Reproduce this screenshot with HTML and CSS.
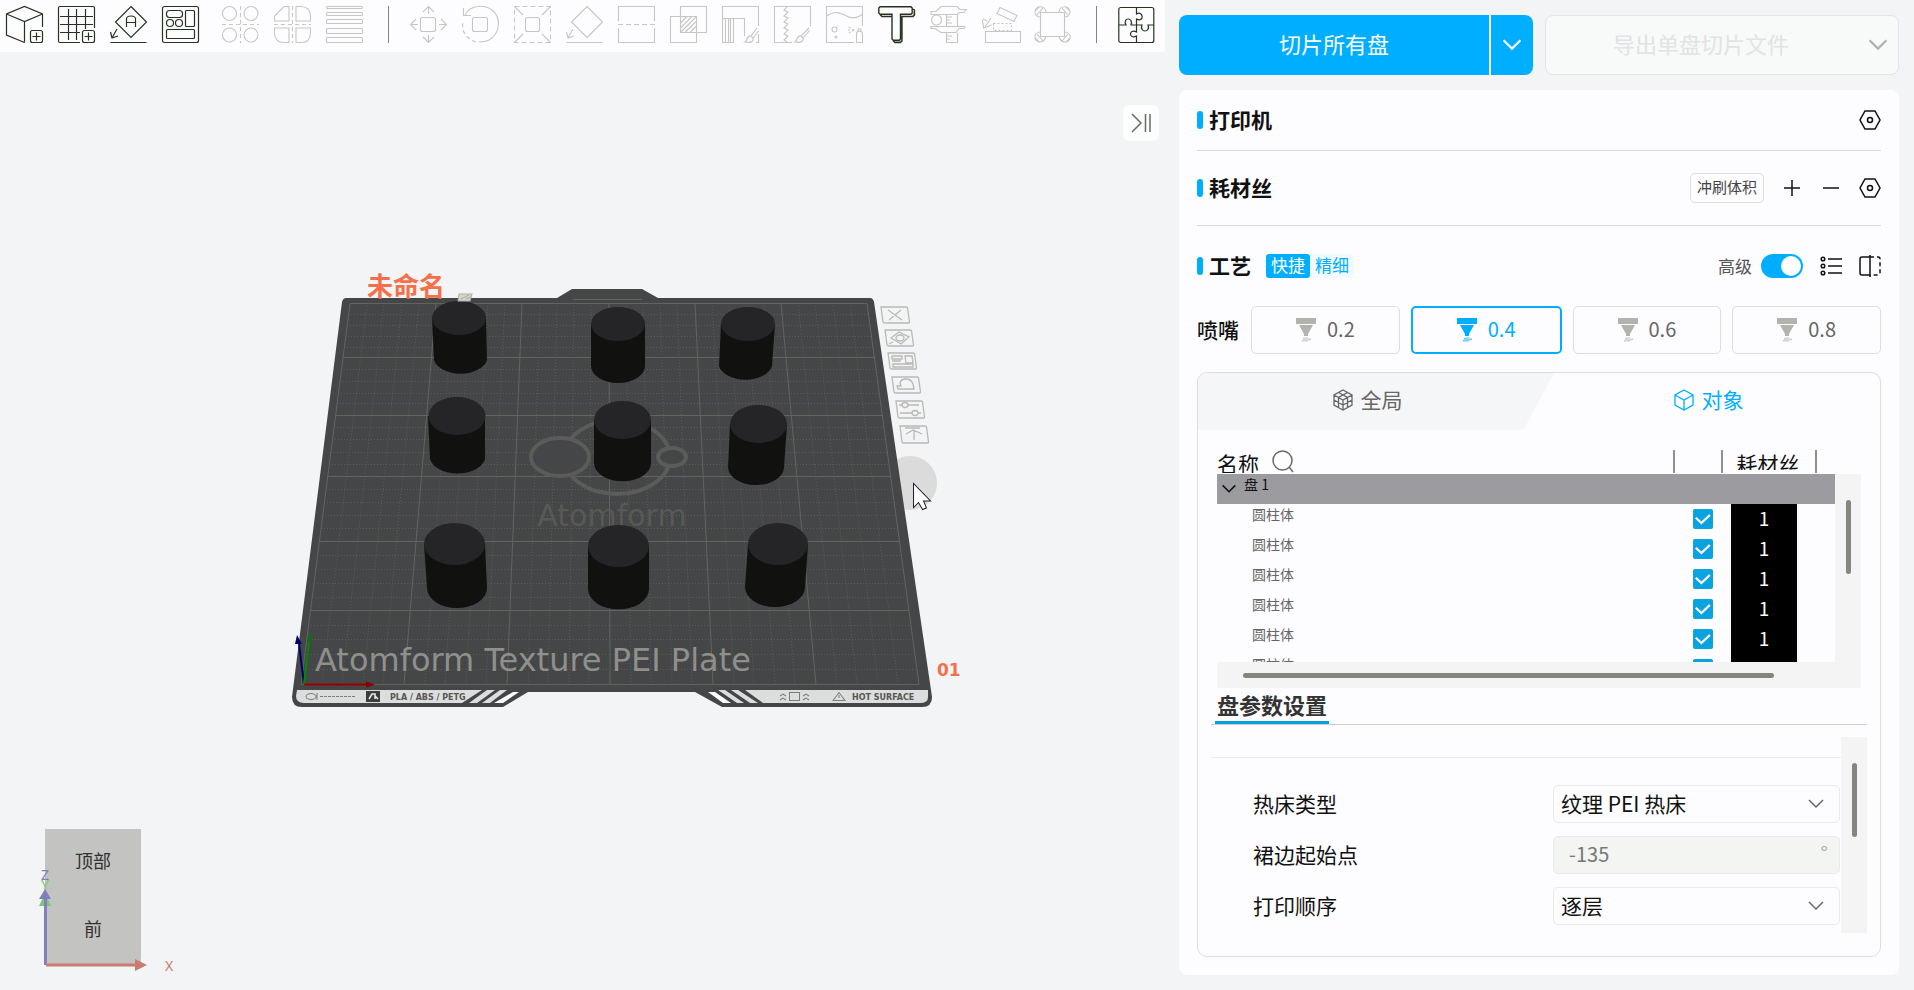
FILE: index.html
```html
<!DOCTYPE html>
<html lang="zh-CN">
<head>
<meta charset="utf-8">
<title>切片</title>
<link rel="stylesheet" href="styles.css">
</head>
<body>
<svg class="defs" aria-hidden="true">
  <symbol id="chevron" viewBox="0 0 20 20"><path d="M3 6l7 7 7-7"/></symbol>
  <symbol id="hex" viewBox="0 0 22 22"><path d="M6 2h10l5 9-5 9H6l-5-9z"/><circle cx="11" cy="11" r="2.5"/></symbol>
  <symbol id="nozzle" viewBox="0 0 20 24"><path class="solid" d="M0 0h20v6H0zM3 7h14l-5 9v2H8v-2z"/><path class="trail" d="M12 19c0 2-5 0-5 2h8c0 2-9 0-9 2h6"/></symbol>
</svg>
<div class="app">
  <main class="viewport">
    <nav class="toolbar" aria-label="工具栏">
      <div class="tools">
        <button class="tool" aria-label="添加模型"><svg viewBox="0 0 37 37"><path d="M18.500 36.500L.5 29V8l18-7.500L36.500 8v13M.5 8l18 7.500L36.500 8M18.500 15.500v21"/><rect x="24.500" y="24.500" width="12" height="12" rx="2"/><path d="M26.500 30.500h8M30.500 26.500v8"/></svg></button>
        <button class="tool" aria-label="添加盘"><svg viewBox="0 0 37 37"><path d="M36.500 22V2a1.500 1.500 0 0 0-1.500-1.500H2A1.500 1.500 0 0 0 .5 2v33A1.500 1.500 0 0 0 2 36.500h20M2 10.500h33M2 18.500h33M2 26.500h20M10.500 3v31M18.500 3v31M27.500 3v20"/><rect x="24.500" y="24.500" width="12" height="12" rx="2"/><path d="M26.500 30.500h8M30.500 26.500v8"/></svg></button>
        <button class="tool" aria-label="自动朝向"><svg viewBox="0 0 37 37"><path d="M21 .5L36.500 16 21 31.500 5.500 16zM.5 36.500h36M7 23L2 32M.5 26l1.500 6 6-2M16.500 21v-8c0-4 9-4 9 0v8M16.500 16.500h9"/></svg></button>
        <button class="tool" aria-label="自动摆盘"><svg viewBox="0 0 37 37"><rect x=".5" y=".5" width="36" height="36" rx="2"/><rect x="4.500" y="4.500" width="16" height="7" rx="3"/><rect x="23.500" y="4.500" width="9" height="16" rx="1"/><circle cx="8" cy="17" r="3.500"/><circle cx="17" cy="17" r="3.500"/><rect x="4.500" y="23.500" width="28" height="9" rx="1"/></svg></button>
      </div>
      <div class="tools tools-split">
        <button class="tool off" aria-label="拆分为对象"><svg viewBox="0 0 37 37"><circle cx="7.500" cy="7.500" r="7"/><circle cx="29" cy="7.500" r="7"/><circle cx="7.500" cy="29" r="7"/><circle cx="29" cy="29" r="7"/><path stroke-dasharray="4 3" d="M18.500 0v37M0 18.500h37"/></svg></button>
        <button class="tool off" aria-label="拆分为零件"><svg viewBox="0 0 37 37"><path d="M15 15H.5V10L10 .5h5zM22 15h14.500V10Q36 .5 27 .5h-5zM15 22H.5v5Q1 36.500 10 36.500h5zM22 22h14.500v5q0 9.500-9.500 9.500h-5z"/><path stroke-dasharray="4 3" d="M18.500 0v37M0 18.500h37"/></svg></button>
        <button class="tool off" aria-label="可变层高"><svg viewBox="0 0 37 37"><rect x=".5" y=".5" width="36" height="2" rx="1"/><rect x=".5" y="6.500" width="36" height="3" rx="1"/><rect x=".5" y="13.500" width="36" height="4" rx="1"/><rect x=".5" y="22.500" width="36" height="5" rx="1"/><rect x=".5" y="31.500" width="36" height="5" rx="1"/></svg></button>
      </div>
      <span class="sep"></span>
      <div class="tools">
        <button class="tool off" aria-label="移动"><svg viewBox="0 0 37 37"><rect x="10.500" y="11.500" width="15" height="14" rx="2"/><path d="M18.500 8V.5M13 6l5.500-5.500L24 6M18.500 29v7.500M13 31l5.500 5.500L24 31M8 18.500H.5M6 13L.5 18.500 6 24M29 18.500h7.500M31 13l5.500 5.500L31 24"/></svg></button>
        <button class="tool off" aria-label="旋转"><svg viewBox="0 0 37 37"><rect x="10.500" y="11.500" width="15" height="14" rx="2"/><path d="M3 9C8-1 22-2 30 4c10 8 8 24-3 30-4 2-7 2-10 2"/><path stroke-dasharray="4 3" d="M14 36C5 33-1 26 1 16"/><path d="M1.500 2v7.500H9"/></svg></button>
        <button class="tool off" aria-label="缩放"><svg viewBox="0 0 37 37"><rect x="11.500" y="11.500" width="14" height="14" rx="2"/><path stroke-dasharray="5 3" d="M.5 .5h36v36H.5z"/><path d="M.5 .5L9 9M36.500 .5L28 9M.5 36.500L9 28M36.500 36.500L28 28"/></svg></button>
        <button class="tool off" aria-label="选择底面"><svg viewBox="0 0 37 37"><path d="M21 .5L36.500 16 21 31.500 5.500 16zM.5 36.500h36M7 23L2 32M.5 26l1.500 6 6-2"/></svg></button>
        <button class="tool off" aria-label="切割"><svg viewBox="0 0 37 37"><path d="M.5 15V.5h36V15M.5 22v14.500h36V22"/><path stroke-dasharray="5 3" d="M0 18.500h37"/></svg></button>
        <button class="tool off" aria-label="布尔运算"><svg viewBox="0 0 37 37"><path d="M10.500 .5h26v26h-26zM.5 10.500h26v26H.5zM10.500 17l6-6M10.500 22l11-11M10.500 26.500l16-16M15 26.500L26.500 15M20 26.500l6.500-6.500"/></svg></button>
        <button class="tool off" aria-label="支撑绘制"><svg viewBox="0 0 37 37"><path d="M36.500 20V.5H.5v36h11v-24M.5 12.500h22V30M3.500 13v23M6.500 13v23M8.500 13v23M35 22l-6 8 2 2 5.500-7M29 30c-5-1-3 5-6 6 5 1 9 0 8-4M36.500 28v8.500H34"/></svg></button>
        <button class="tool off" aria-label="接缝绘制"><svg viewBox="0 0 37 37"><path d="M36.500 20V.500H.5v36H18M13 1l-3 3 4 2-4 4 4 2-4 4 4 2-4 4 4 2-4 4 4 2-4 4 3 2M35 22l-8 8 2 2 7-8M27 30c-5-1-3 5-6 6 5 1 9 0 8-4"/></svg></button>
        <button class="tool off" aria-label="颜色绘制"><svg viewBox="0 0 37 37"><path d="M36.500 20V.5H.5v36H28M.5 10c9-6 14-3 20 0 5 3 11 2 16-2M30.500 27.500c0-3 6-3 6 0v9h-6zM32 25v-2h3v2"/><circle cx="8.500" cy="23.500" r="2.500"/><circle cx="10" cy="31" r="1"/><path stroke-dasharray="2 2" d="M28 24l-7-4M28 24h-8M28 24l-7 4"/></svg></button>
        <button class="tool bold" aria-label="文字"><svg viewBox="0 0 37 37"><path class="shade" d="M23 10h11l2-6v5l-1.500 1.500H24V35l-2 1.500h-4l-2-2h5.500L23 33z"/><path d="M2 .8h31l1.200 1.200v5L33 8.200H22.500V33l-1.300 1.200h-6L14 33V8.200H2L.8 7V2zM35 3l1.500 1v5L35 10.500H24V35l-1.500 1.500H17L15 34.500M2 8.500L4 10.500h10"/></svg></button>
        <button class="tool off" aria-label="测量"><svg viewBox="0 0 37 37"><path d="M1 5.500h5l5-5h16l3 3h6l-2 3h-5l-2 2H1zM1 20.500h34l-1 2h-5l-3 4H11l-6-4H1zM16.500 8v12M27.500 8v12M16.500 27v9.500h11V27M17 11h5M17 14h3M17 17h5M17 30h5M17 33h3"/><circle cx="6.500" cy="14" r="5"/></svg></button>
        <button class="tool off" aria-label="装配"><svg viewBox="0 0 37 37"><path d="M3.500 25.500h35v11h-35zM18 1.500l17 8-3 6-17-8zM9 12l-6 9M.5 14l1 8 8-3M1 13l4 2"/><path stroke-dasharray="2 2" d="M11.500 17.500h18v7h-18z"/></svg></button>
        <button class="tool off" aria-label="浮雕"><svg viewBox="0 0 37 37"><path d="M6.500 6.500h24v24h-24zM12 6.500C12-1 1-1 1 6c0 3 2 5 5.500 5M25 6.500C25-1 36-1 36 6c0 3-2 5-5.500 5M6.500 26C-1 26-1 36 6 36c3 0 5-2 6-5.500M30.500 26C38 26 38 36 31 36c-3 0-5-2-6-5.500M3 9l6-7M1 5l4-4M28 2l6 7M32 1l4 4M3 28l6 7M1 32l4 4M34 28l-6 7M36 32l-4 4"/></svg></button>
      </div>
      <span class="sep"></span>
      <div class="tools">
        <button class="tool" aria-label="拼装视图"><svg viewBox="0 0 37 37"><rect x=".8" y="1.500" width="35" height="35" rx="2"/><path d="M18.500 1.500V8c7-4 8 9 0 5v6M1 19h7c-4-8 8-8 5 0h5.500M18.500 19H24c-3 8 9 8 6 0h6M18.500 19v7c-8-4-8 8 0 4v6.500"/></svg></button>
      </div>
    </nav>

    <div class="stage">
      <svg class="scene" viewBox="0 52 1179 938" role="img" aria-label="打印盘">
        <circle class="halo" cx="910" cy="483" r="27"/>
        <path class="plate" d="M346 298H557L572 289H642L658 298H870Q873 298 874 302L932 697Q932 707 922 707H722L695 692H528L503 707H302Q292 707 292 697L342 302Q343 298 346 298z"/>
        <path class="tab-line" d="M573 299.500H642"/>
        <path class="grid-minor" d="M367 303L322 684M384 303L342 684M402 303L363 684M419 303L383 684M453 303L425 684M471 303L445 684M488 303L466 684M505 303L486 684M540 303L528 684M557 303L548 684M574 303L569 684M591 303L589 684M626 303L631 684M643 303L651 684M660 303L672 684M677 303L692 684M712 303L734 684M729 303L754 684M746 303L775 684M764 303L795 684M798 303L837 684M815 303L857 684M833 303L878 684M850 303L898 684"/>
        <path class="grid-minor" d="M348 314.500H869M347 325.500H870M345 336.500H872M344 347.500H873M341 369.500H876M340 381.500H878M338 393.500H880M337 403.500H881M334 427.500H884M332 439.500H886M331 452.500H888M329 464.500H889M326 489.500H893M324 502.500H895M322 515.500H896M321 528.500H898M317 555.500H902M315 569.500H904M314 583.500H906M312 597.500H907M308 625.500H911M306 639.500H913M305 654.500H915M303 669.500H917"/>
        <path class="grid-major" d="M350 303.500L301 684.500M436 303.500L404 684.500M522 303.500L507 684.500M609 303.500L610 684.500M695 303.500L713 684.500M781 303.500L816 684.500M867 303.500L919 684.500M350 303.500H867M343 357.500H875M336 415.500H883M327 476.500H891M319 541.500H900M310 610.500H909M301 684.500H919"/>
        <g class="brand">
          <ellipse cx="617" cy="457" rx="53" ry="37"/>
          <ellipse class="knock" cx="560" cy="457" rx="29" ry="19"/>
          <ellipse class="knock" cx="672" cy="457" rx="14" ry="9"/>
        </g>
        <text class="brand-name" x="612" y="526" text-anchor="middle">Atomform</text>
        <text class="plate-type" x="315" y="671">Atomform Texture PEI Plate</text>

        <path class="strip" d="M297 690H482L462 703H304Q296 703 296 696zM487 690H495L477 703H469zM500 690H507L490 703H482zM745 690H928V697Q928 703 920 703H763zM731 690H738L758 703H750zM718 690H725L744 703H737z"/>
        <path class="gap" d="M513 692H519L503 703H494zM708 692H715L731 703H723z"/>
        <path class="ink" d="M306 696.500a5 3 0 1 1 10 0a5 3 0 1 1-10 0M317 693v7"/><path class="ink" stroke-dasharray="3 1" d="M320 696.500h35"/>
        <path class="ink-solid" d="M366 691h14v11h-14z"/><path class="ink-cut" d="M369 699l3-5h3v5M375 696l3 3"/>
        <text class="strip-text" x="390" y="700">PLA / ABS / PETG</text>
        <path class="ink" d="M780 696l3-2 3 2M780 700l3-2 3 2M789.500 692.500h10v8h-10zM803 696l3-2 3 2M803 700l3-2 3 2M833 700.500l6-8 6 8zM839 695v3"/>
        <text class="strip-text" x="852" y="700">HOT SURFACE</text>

        <g class="body">
          <path d="M432 318H486L487 360A27 17 0 0 1 434 360z"/><path d="M591 324H645V366A27 17 0 0 1 591 366z"/><path d="M721 324H775L772 366A27 17 0 0 1 719 366z"/>
          <path d="M428 416H485V459A28 18 0 0 1 430 459z"/><path d="M594 420H651V463A28 18 0 0 1 594 463z"/><path d="M730 424H787L784 467A28 18 0 0 1 728 467z"/>
          <path d="M424 544H485L487 588A30 20 0 0 1 427 588z"/><path d="M588 546H649V589A30 20 0 0 1 588 589z"/><path d="M748 544H808L805 587A30 20 0 0 1 745 587z"/>
        </g>
        <g class="cap">
          <ellipse cx="459" cy="318" rx="27" ry="17"/><ellipse cx="618" cy="324" rx="27" ry="17"/><ellipse cx="748" cy="324" rx="27" ry="17"/>
          <ellipse cx="457" cy="416" rx="28.500" ry="19"/><ellipse cx="622.500" cy="420" rx="28.500" ry="19"/><ellipse cx="758.500" cy="424" rx="28.500" ry="19"/>
          <ellipse cx="454.500" cy="544" rx="30.500" ry="21"/><ellipse cx="618.500" cy="546" rx="30.500" ry="21"/><ellipse cx="778" cy="544" rx="30" ry="21"/>
        </g>
        <text class="plate-name" x="406" y="296" text-anchor="middle">未命名</text>
        <path class="pencil" d="M459 294h13l-2 7h-12zM461 299l8-4M466 299l5-2"/>
        <text class="plate-no" x="937" y="676">01</text>

        <g class="side">
          <path d="M881 307h25q1 0 1.500 1l2 14q0 1-1 1h-24q-1 0-1.500-1zM888 310l14 10M901 310l-12 10"/>
          <path d="M885 330h25q1 0 1.500 1l2 14q0 1-1 1h-24q-1 0-1.500-1zM891 338l8-6 10 5-8 7zM889 344l4-2"/><ellipse cx="900" cy="338" rx="4" ry="3"/>
          <path d="M888 353h25q1 0 1.500 1l2 14q0 1-1 1h-24q-1 0-1.500-1zM892 356h10v3h-10zM905 356h7l1 7h-7zM892 361h9M893 364h20v3h-20z"/>
          <path d="M892 377h25q1 0 1.500 1l2 14q0 1-1 1h-24q-1 0-1.500-1zM898 389l-1-3h4l-1-3q1-4 6-4t7 5l1 5z"/>
          <path d="M896 401h25q1 0 1.500 1l2 15q0 1-1 1h-24q-1 0-1.500-1zM899 405h4M908 405h11M900 413h12M918 413h3"/><ellipse cx="905" cy="405" rx="3" ry="2.500"/><ellipse cx="915" cy="413" rx="3" ry="2.500"/>
          <path d="M900 426h25q1 0 1.500 1l2 15q0 1-1 1h-24q-1 0-1.500-1zM905 428h15M914 440v-10M906 434l7-4 9 4"/>
        </g>

        <path class="axis-z" d="M304 684L299 644"/><path class="axis-z-head" d="M297 635l-2 9h7z"/>
        <path class="axis-y" d="M304 684L309 642"/><path class="axis-y-head" d="M310 633l-3 8h5z"/>
        <path class="axis-x" d="M304 684.500H368"/><path class="axis-x-head" d="M375 684.500l-9-3v6z"/>

        <path class="cursor" d="M913.500 483.500v24l5-5 4 7 4-1.500-3-7h7z"/>

        <rect class="cube" x="45" y="829" width="96" height="136"/>
        <text class="cube-text" x="93" y="868" text-anchor="middle">顶部</text>
        <text class="cube-text" x="93" y="936" text-anchor="middle">前</text>
        <text class="lab-y" x="45" y="890" text-anchor="middle">Y</text>
        <path class="gy" d="M45 893l6 13H39z"/>
        <text class="lab-z" x="45" y="880" text-anchor="middle">Z</text>
        <path class="gz" d="M44 965V899h-5l6-10 6 10h-4v66z"/>
        <path class="gx" d="M46 963.500h89V959l12 6-12 6v-4.500H46z"/>
        <text class="lab-x" x="169" y="971" text-anchor="middle">X</text>
      </svg>
      <button class="collapse" aria-label="收起面板"><svg viewBox="0 0 20 20"><path d="M1 1l9 9-9 9M14.500 1v18M19 1v18"/></svg></button>
    </div>
  </main>

  <aside class="side-panel">
    <div class="actions">
      <div class="slice">
        <button class="slice-main">切片所有盘</button>
        <button class="slice-more" aria-label="切片选项"><svg class="chev"><use href="#chevron"/></svg></button>
      </div>
      <button class="export" disabled><span>导出单盘切片文件</span><svg class="chev"><use href="#chevron"/></svg></button>
    </div>

    <div class="card">
      <section class="row row-printer">
        <h2>打印机</h2>
        <div class="row-tools"><button class="icon-btn" aria-label="打印机设置"><svg><use href="#hex"/></svg></button></div>
      </section>
      <section class="row row-filament">
        <h2>耗材丝</h2>
        <div class="row-tools">
          <button class="flush">冲刷体积</button>
          <button class="icon-btn" aria-label="添加耗材丝"><svg viewBox="0 0 22 22"><path d="M3 11h16M11 3v16"/></svg></button>
          <button class="icon-btn" aria-label="移除耗材丝"><svg viewBox="0 0 22 22"><path d="M3 11h16"/></svg></button>
          <button class="icon-btn" aria-label="耗材丝设置"><svg><use href="#hex"/></svg></button>
        </div>
      </section>
      <section class="row row-process">
        <h2>工艺</h2>
        <div class="modes"><button class="mode on">快捷</button><button class="mode">精细</button></div>
        <div class="row-tools">
          <label class="adv"><span>高级</span><input type="checkbox" class="switch" checked></label>
          <button class="icon-btn" aria-label="参数列表"><svg viewBox="0 0 22 22"><circle cx="3" cy="4" r="1.800"/><circle cx="3" cy="11" r="1.800"/><circle cx="3" cy="18" r="1.800"/><path d="M8 4h14M8 11h14M8 18h14"/></svg></button>
          <button class="icon-btn" aria-label="对比参数"><svg viewBox="0 0 22 22"><path d="M11 0v22M11 2H3Q1 2 1 4v14q0 2 2 2h8"/><path stroke-dasharray="4 3" d="M11 2h8q2 0 2 2v14q0 2-2 2h-8"/></svg></button>
        </div>
      </section>

      <fieldset class="nozzles">
        <legend class="nozzle-label">喷嘴</legend>
        <label class="nozzle"><input type="radio" name="nozzle"><svg><use href="#nozzle"/></svg><span>0.2</span></label>
        <label class="nozzle"><input type="radio" name="nozzle" checked><svg><use href="#nozzle"/></svg><span>0.4</span></label>
        <label class="nozzle"><input type="radio" name="nozzle"><svg><use href="#nozzle"/></svg><span>0.6</span></label>
        <label class="nozzle"><input type="radio" name="nozzle"><svg><use href="#nozzle"/></svg><span>0.8</span></label>
      </fieldset>

      <div class="scope">
        <div class="scope-tabs" role="tablist">
          <button class="scope-tab" role="tab"><svg viewBox="0 0 20 22"><path d="M10 1l9 5v10l-9 5-9-5V6zM1 6l9 5 9-5M10 11v10M5.500 3.500l9 5v10M14.500 3.500l-9 5v10M1 11l9 5 9-5"/></svg>全局</button>
          <button class="scope-tab on" role="tab" aria-selected="true"><svg viewBox="0 0 20 22"><path d="M10 1l9 5v10l-9 5-9-5V6zM1 6l9 5 9-5M10 11v10"/></svg>对象</button>
        </div>

        <div class="objects">
          <div class="object-clip">
            <table class="object-table">
              <colgroup><col><col class="c-check"><col class="c-fil"><col class="c-end"></colgroup>
              <thead><tr>
                <th><div class="th name">名称<svg viewBox="0 0 22 24"><circle cx="10.500" cy="10.500" r="9.500"/><path d="M17 17l4 5"/></svg></div></th>
                <th class="bar"></th>
                <th class="bar"><div class="th">耗材丝</div></th>
                <th class="bar"></th>
              </tr></thead>
              <tbody>
                <tr class="plate-row"><td colspan="4"><div class="plate-cell"><svg class="chev-s"><use href="#chevron"/></svg><span>盘 1</span></div></td></tr>
                <tr><td class="obj">圆柱体</td><td class="ck"><input type="checkbox" checked aria-label="打印"></td><td class="fil"><span>1</span></td><td></td></tr>
                <tr><td class="obj">圆柱体</td><td class="ck"><input type="checkbox" checked aria-label="打印"></td><td class="fil"><span>1</span></td><td></td></tr>
                <tr><td class="obj">圆柱体</td><td class="ck"><input type="checkbox" checked aria-label="打印"></td><td class="fil"><span>1</span></td><td></td></tr>
                <tr><td class="obj">圆柱体</td><td class="ck"><input type="checkbox" checked aria-label="打印"></td><td class="fil"><span>1</span></td><td></td></tr>
                <tr><td class="obj">圆柱体</td><td class="ck"><input type="checkbox" checked aria-label="打印"></td><td class="fil"><span>1</span></td><td></td></tr>
                <tr><td class="obj">圆柱体</td><td class="ck"><input type="checkbox" checked aria-label="打印"></td><td class="fil"><span>1</span></td><td></td></tr>
              </tbody>
            </table>
          </div>
          <div class="track-v"><div class="thumb-v"></div></div>
          <div class="track-h"><div class="thumb-h"></div></div>
        </div>

        <div class="params">
          <h3><span>盘参数设置</span></h3>
          <div class="param-body">
            <form class="param-form">
              <label for="bed">热床类型</label>
              <div class="field"><select id="bed"><option>纹理 PEI 热床</option></select><svg><use href="#chevron"/></svg></div>
              <label for="skirt">裙边起始点</label>
              <div class="field off"><input id="skirt" type="text" value="-135" disabled><span class="unit">°</span></div>
              <label for="order">打印顺序</label>
              <div class="field"><select id="order"><option>逐层</option></select><svg><use href="#chevron"/></svg></div>
            </form>
            <div class="track-p"><div class="thumb-v"></div></div>
          </div>
        </div>
      </div>
    </div>
  </aside>
</div>
</body>
</html>
```

FILE: styles.css
```css
:root {
  --bg: #f2f4f5;
  --panel: #fdfdff;
  --accent: #00aeff;
  --line: #dcdce4;
  --track: #f4f4f4;
}

* { box-sizing: border-box; }

body {
  margin: 0;
  background: var(--bg);
  color: #111;
  font-family: "Noto Sans CJK SC", "Noto Sans", sans-serif;
  font-size: 21px;
}

button, input, select {
  margin: 0;
  padding: 0;
  border: 0;
  background: none;
  color: inherit;
  font: inherit;
}

svg { display: block; fill: none; stroke: currentColor; }
.defs { position: absolute; width: 0; height: 0; }

.app {
  display: grid;
  grid-template-columns: minmax(0, 1fr) 38.4%;
  min-height: 100vh;
}

/* Toolbar */
.viewport { display: flex; flex-direction: column; min-width: 0; }
.toolbar {
  display: flex;
  align-items: center;
  height: 52px;
  margin-right: 14px;
  padding: 0 6px 4px;
  background: var(--panel);
}
.tools { display: flex; gap: 15px; }
.tools-split { margin-left: 23px; }
.tool { width: 37px; height: 37px; color: #26331f; }
.tool svg { width: 37px; height: 37px; overflow: visible; stroke-width: 1.2; }
.tool.off { color: #c6c6c2; }
.tool.off svg { stroke-width: 1.1; }
.tool.bold svg { stroke-width: 1.4; }
.tool .shade { fill: #b4b9b2; stroke: none; }
.sep { width: 1px; height: 37px; margin: 0 21px 0 25px; background: #85857c; }

/* 3D view */
.stage { position: relative; flex: 1; min-height: 0; }
.scene { width: 100%; height: 100%; }
.scene text { stroke: none; }
.plate { fill: #454648; stroke: none; }
.tab-line { stroke: #66665a; }
.grid-minor { stroke: #5c5d55; stroke-width: 1; stroke-dasharray: 1 2; }
.grid-major { stroke: #63645d; stroke-width: 1; }
.brand { stroke: #5b5c59; stroke-width: 4; }
.knock { fill: #454648; }
.brand-name { fill: #585955; font: 30px "DejaVu Sans", sans-serif; }
.plate-type { fill: #8f908c; font: 32px "DejaVu Sans", sans-serif; }
.strip { fill: #dcdddd; stroke: none; }
.gap { fill: #fdfdff; stroke: none; }
.ink { stroke: #7c7d79; }
.ink-solid { fill: #3c3d3c; stroke: none; }
.ink-cut { stroke: #eee; stroke-width: 1.5; }
.strip-text { fill: #555653; font: bold 8px "DejaVu Sans", sans-serif; }
.body { fill: #11110f; stroke: none; }
.cap { fill: #252527; stroke: none; }
.plate-name { fill: #f5704a; font: bold 26px "Noto Sans CJK SC", sans-serif; }
.plate-no { fill: #f5704a; font: bold 17px "DejaVu Sans", sans-serif; }
.pencil { fill: #d5d5d0; stroke: #b0b0a8; }
.side { stroke: #b9b9b6; stroke-width: 1.3; }
.axis-z { stroke: #00006e; stroke-width: 2; }
.axis-z-head { fill: #00006e; stroke: none; }
.axis-y { stroke: #008a00; stroke-width: 2; }
.axis-y-head { fill: #007a00; stroke: none; }
.axis-x { stroke: #9a0000; stroke-width: 2; }
.axis-x-head { fill: #850000; stroke: none; }
.halo { fill: #dadbda; stroke: none; }
.cursor { fill: #fff; stroke: #1a1a2a; }
.cube { fill: #c3c3c2; stroke: none; }
.cube-text { fill: #30302c; font: 18px "Noto Sans CJK SC", sans-serif; }
.lab-x, .lab-y, .lab-z { font: 14px "Noto Sans", sans-serif; }
.lab-x { fill: #c97c74; }
.lab-y { fill: #7cc67c; }
.lab-z { fill: #7f80b4; }
.gx { fill: #c97c74; stroke: none; }
.gy { fill: #7cc67c; stroke: none; }
.gz { fill: #8081bb; stroke: none; }

.collapse {
  position: absolute;
  top: 53px;
  right: 20px;
  display: grid;
  place-items: center;
  width: 36px;
  height: 36px;
  border-radius: 6px;
  background: #fcfdfd;
  color: #6a6a66;
}
.collapse svg { width: 20px; height: 20px; stroke-width: 1.5; }

/* Right panel */
.side-panel {
  display: flex;
  flex-direction: column;
  gap: 15px;
  min-width: 0;
  padding: 15px 15px 15px 0;
}
.actions { display: grid; grid-template-columns: 1fr 1fr; gap: 12px; height: 60px; }
.actions button { font-size: 22px; }
.chev { width: 24px; height: 24px; stroke-width: 1.8; }
.slice {
  display: flex;
  gap: 2px;
  overflow: hidden;
  border-radius: 8px;
  background: #fff;
}
.slice button { background: var(--accent); color: #fff; }
.slice .slice-main { flex: 1; padding-bottom: 4px; }
.slice-more { display: grid; place-items: center; width: 42px; }
.export {
  display: flex;
  align-items: center;
  padding: 0 8px 0 0;
  border: 1px solid #e4e5ea;
  border-radius: 8px;
  background: #f8f9f9;
  color: #e2e3e4;
}
.export span { flex: 1; padding: 0 10px 4px 0; }
.export .chev { color: #b0b0ac; }

.card {
  flex: 1;
  display: flex;
  flex-direction: column;
  padding: 0 18px 18px;
  border-radius: 8px;
  background: var(--panel);
}
.row { display: flex; align-items: center; border-bottom: 1px solid #d6d7dc; }
.row-printer { height: 61px; }
.row-filament { height: 75px; }
.row-process { height: 80px; border-bottom: 0; }
.row h2 {
  display: flex;
  align-items: center;
  gap: 6px;
  margin: 0;
  padding-bottom: 2px;
  font-size: 21px;
  line-height: 28px;
}
.row h2::before {
  content: "";
  width: 6px;
  height: 18px;
  margin-top: 2px;
  border-radius: 3px;
  background: var(--accent);
}
.row-tools { display: flex; align-items: center; gap: 17px; margin-left: auto; }
.icon-btn { width: 22px; height: 22px; }
.icon-btn svg { width: 22px; height: 22px; stroke-width: 1.5; }
.flush {
  height: 30px;
  padding: 0 6px 3px;
  border: 1px solid var(--line);
  border-radius: 5px;
  color: #444;
  font-size: 15px;
}
.modes { display: flex; margin-left: 15px; border-radius: 4px; background: #f1fafd; }
.mode {
  height: 24px;
  padding: 0 5px 2px;
  border-radius: 3px;
  color: var(--accent);
  font-size: 17px;
  line-height: 22px;
}
.mode.on { background: var(--accent); color: #fff; }
.adv { display: flex; align-items: center; gap: 9px; color: #555; font-size: 17px; }
.adv span { padding-bottom: 2px; }
.switch {
  appearance: none;
  display: flex;
  justify-content: flex-end;
  width: 42px;
  height: 24px;
  padding: 2px;
  border-radius: 12px;
  background: var(--accent);
}
.switch::before { content: ""; width: 20px; height: 20px; border-radius: 50%; background: #fff; }

.nozzles {
  display: flex;
  gap: 11px;
  align-items: center;
  height: 48px;
  margin: 0;
  padding: 0;
  border: 0;
}
.nozzle-label { float: left; padding: 0 1px 2px 0; font-weight: 500; line-height: 28px; }
.nozzle {
  flex: 1;
  display: flex;
  align-items: center;
  justify-content: center;
  gap: 11px;
  height: 48px;
  border: 1px solid var(--line);
  border-radius: 5px;
  color: #666;
  font-size: 20px;
}
.nozzle span { padding-bottom: 3px; }
.nozzle input { position: absolute; opacity: 0; }
.nozzle svg { width: 20px; height: 24px; color: #b3b3ae; }
.nozzle:has(:checked) { border: 2px solid var(--accent); color: var(--accent); }
.nozzle:has(:checked) svg { color: var(--accent); }
.solid { fill: currentColor; stroke: none; }
.trail { stroke-width: 1; opacity: .6; }

.scope {
  flex: 1;
  display: flex;
  flex-direction: column;
  margin-top: 18px;
  border: 1px solid var(--line);
  border-radius: 10px;
}
.scope-tabs { position: relative; display: grid; grid-template-columns: 1fr 1fr; height: 57px; }
.scope-tabs::before {
  content: "";
  position: absolute;
  inset: 0;
  border-radius: 10px 0 0;
  background: #f5f6f7;
  clip-path: polygon(0 0, 52.2% 0, 47.7% 100%, 0 100%);
}
.scope-tab {
  position: relative;
  display: flex;
  align-items: center;
  justify-content: center;
  gap: 8px;
  padding: 0 2px 5px 0;
  color: #666;
}
.scope-tab svg { width: 20px; height: 22px; margin-top: 2px; stroke-width: 1.3; }
.scope-tab.on { color: var(--accent); }

/* Object list */
.objects {
  display: grid;
  grid-template-columns: minmax(0, 1fr) 26px;
  margin: 20px 19px 0;
}
.object-clip { height: 212px; overflow: hidden; }
.object-table { width: 100%; border-collapse: collapse; table-layout: fixed; }
.object-table th, .object-table td { padding: 0; font-weight: 400; vertical-align: top; }
.c-check { width: 48px; }
.c-fil { width: 94px; }
.c-end { width: 20px; }
.object-table th { height: 24px; }
.th { height: 20px; overflow: hidden; line-height: 26px; }
.th.name { display: flex; gap: 13px; height: 23px; text-align: left; }
.th.name svg { width: 22px; height: 24px; color: #6a6a60; stroke-width: 1.5; }
.bar { background: linear-gradient(#8f8f96, #8f8f96) no-repeat 0 0 / 2px 23px; }
.object-table tbody tr { height: 30px; }
.plate-row { background: #9c9ca0; }
.plate-cell { display: flex; gap: 6px; height: 30px; padding-left: 3px; font-size: 14px; line-height: 20px; }
.chev-s { width: 18px; height: 18px; margin-top: 6px; stroke-width: 1.8; }
.object-table .obj { padding-left: 35px; color: #666; font-size: 14px; line-height: 20px; }
.object-table .ck { padding: 5px 0 0 20px; }
.ck input {
  appearance: none;
  display: block;
  width: 20px;
  height: 20px;
  border-radius: 2px;
  background: #0aa2df;
}
.ck input::before {
  content: "";
  display: block;
  width: 20px;
  height: 20px;
  background: #fff;
  clip-path: polygon(10% 48%, 18% 40%, 42% 62%, 80% 26%, 88% 34%, 42% 78%);
}
.object-table .fil { padding: 0 18px 0 10px; }
.fil span { display: block; height: 30px; background: #000; color: #fff; font-size: 19px; line-height: 28px; text-align: center; }
.track-v { margin-top: 24px; padding: 26px 10px 0 11px; background: var(--track); }
.thumb-v { height: 74px; border-radius: 3px; background: #858580; }
.track-h { grid-column: 1 / -1; height: 26px; padding: 11px 87px 0 26px; background: var(--track); }
.thumb-h { height: 5px; border-radius: 3px; background: #858580; }

/* Plate parameters */
.params { flex: 1; display: flex; flex-direction: column; margin: 0 13px; }
.params h3 {
  display: flex;
  height: 37px;
  margin: 0;
  padding-left: 4px;
  border-bottom: 1px solid #cfcfca;
  color: #333;
  font-size: 22px;
  line-height: 33px;
}
.params h3 span { padding: 0 2px; border-bottom: 3px solid #0a9fdc; }
.param-body { display: grid; grid-template-columns: minmax(0, 1fr) 26px; height: 196px; margin-top: 12px; }
.param-form {
  display: grid;
  grid-template-columns: minmax(0, 300fr) minmax(0, 287fr);
  grid-auto-rows: 38px;
  gap: 13px 0;
  align-items: center;
  margin-top: 20px;
  padding: 27px 1px 0 42px;
  border-top: 1px solid #ebebf0;
}
.param-form label { padding-bottom: 3px; }
.field {
  position: relative;
  height: 38px;
  border: 1px solid #e9e9ef;
  border-radius: 5px;
}
.field select, .field input { width: 100%; height: 100%; padding: 0 7px 3px; appearance: none; }
.field svg { position: absolute; right: 13px; top: 8px; width: 20px; height: 20px; color: #666; stroke-width: 1.5; pointer-events: none; }
.field.off { background: #f3f5f3; color: #777; font-size: 20px; }
.field.off input { padding-left: 15px; }
.unit { position: absolute; right: 11px; top: 0; color: #aaa; font-size: 20px; line-height: 32px; }
.track-p { padding: 26px 10px 0 11px; background: var(--track); }
```
